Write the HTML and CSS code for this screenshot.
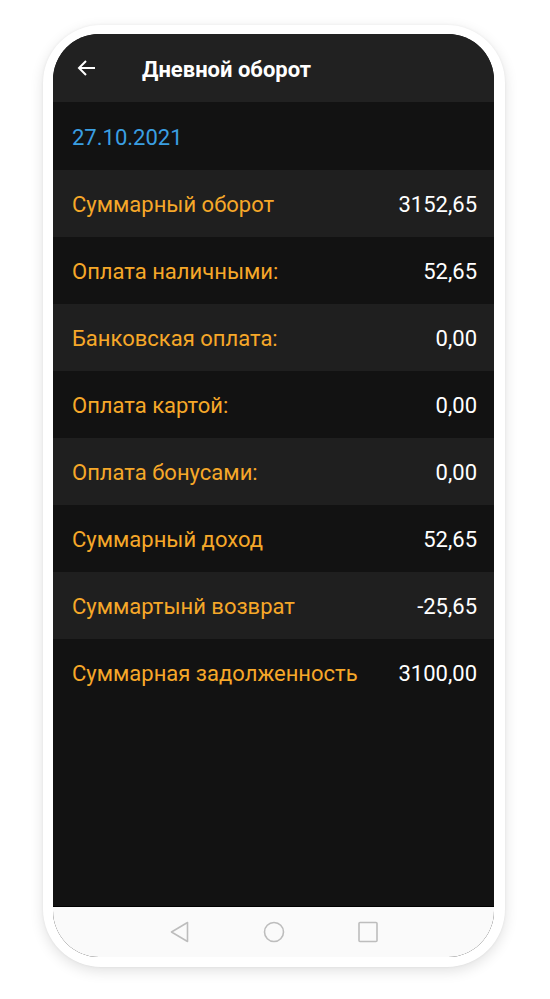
FILE: index.html
```html
<!DOCTYPE html>
<html lang="ru">
<head>
<meta charset="utf-8">
<title>Дневной оборот</title>
<link rel="stylesheet" href="styles.css">
</head>
<body>
<div class="phone">
  <div class="screen">
    <header class="appbar">
      <svg class="back" width="24" height="24" viewBox="0 0 24 24"><path d="M20 12H4.5M11 5l-7 7 7 7" fill="none" stroke="#fff" stroke-width="2"/></svg>
      <h1 class="title">Дневной оборот</h1>
    </header>
    <div class="content">
      <div class="row date-row"><span class="date">27.10.2021</span></div>
      <div class="row alt"><span class="label">Суммарный оборот</span><span class="value">3152,65</span></div>
      <div class="row"><span class="label">Оплата наличными:</span><span class="value">52,65</span></div>
      <div class="row alt"><span class="label">Банковская оплата:</span><span class="value">0,00</span></div>
      <div class="row"><span class="label">Оплата картой:</span><span class="value">0,00</span></div>
      <div class="row alt"><span class="label">Оплата бонусами:</span><span class="value">0,00</span></div>
      <div class="row"><span class="label">Суммарный доход</span><span class="value">52,65</span></div>
      <div class="row alt"><span class="label">Суммартынй возврат</span><span class="value">-25,65</span></div>
      <div class="row"><span class="label">Суммарная задолженность</span><span class="value">3100,00</span></div>
    </div>
    <nav class="navbar">
      <svg width="22" height="22" viewBox="0 0 22 22"><path d="M18.5 1.5v19L2.5 11z" fill="none" stroke="#bdbdbd" stroke-width="1.6" stroke-linejoin="round"/></svg>
      <svg width="22" height="22" viewBox="0 0 22 22"><circle cx="11" cy="11" r="9.5" fill="none" stroke="#bdbdbd" stroke-width="1.6"/></svg>
      <svg width="22" height="22" viewBox="0 0 22 22"><rect x="2" y="1.5" width="18" height="19" rx="1" fill="none" stroke="#bdbdbd" stroke-width="1.6"/></svg>
    </nav>
  </div>
</div>
</body>
</html>
```

FILE: styles.css
```css
html, body {
  margin: 0;
  padding: 0;
  background: #ffffff;
}
body {
  font-family: Roboto, "Noto Sans", sans-serif;
  width: 550px;
  height: 999px;
}
.phone {
  margin: 25px 0 0 43px;
  width: 462px;
  height: 942px;
  box-sizing: border-box;
  padding: 9px 11px 10px 10px;
  background: #ffffff;
  border-radius: 58px;
  box-shadow: 0 4px 14px rgba(0,0,0,0.12), 0 0 3px rgba(0,0,0,0.06);
}
.screen {
  height: 100%;
  border-radius: 46px;
  overflow: hidden;
  background: #121212;
  display: flex;
  flex-direction: column;
}
.appbar {
  height: 68px;
  flex: none;
  background: #212121;
  display: flex;
  align-items: center;
  padding-left: 22px;
  box-sizing: border-box;
}
.back {
  display: block;
  margin-top: 0;
}
.title {
  margin: 4px 0 0 43px;
  color: #ffffff;
  font-size: 22px;
  font-weight: 700;
  line-height: 1;
}
.content {
  flex: 1;
  background: #121212;
  border-bottom: 1px solid #000;
}
.row {
  height: 67px;
  display: flex;
  align-items: center;
  justify-content: space-between;
  padding: 2px 17px 0 19px;
  box-sizing: border-box;
  font-size: 22px;
}
.date-row {
  height: 68px;
}
.alt {
  background: #1f1f1f;
}
.date {
  color: #3a9fe2;
}
.label {
  color: #f6a829;
}
.value {
  color: #ffffff;
}
.navbar {
  height: 50px;
  flex: none;
  background: #fafafa;
  display: flex;
  justify-content: center;
  align-items: center;
  gap: 72px;
}
```
